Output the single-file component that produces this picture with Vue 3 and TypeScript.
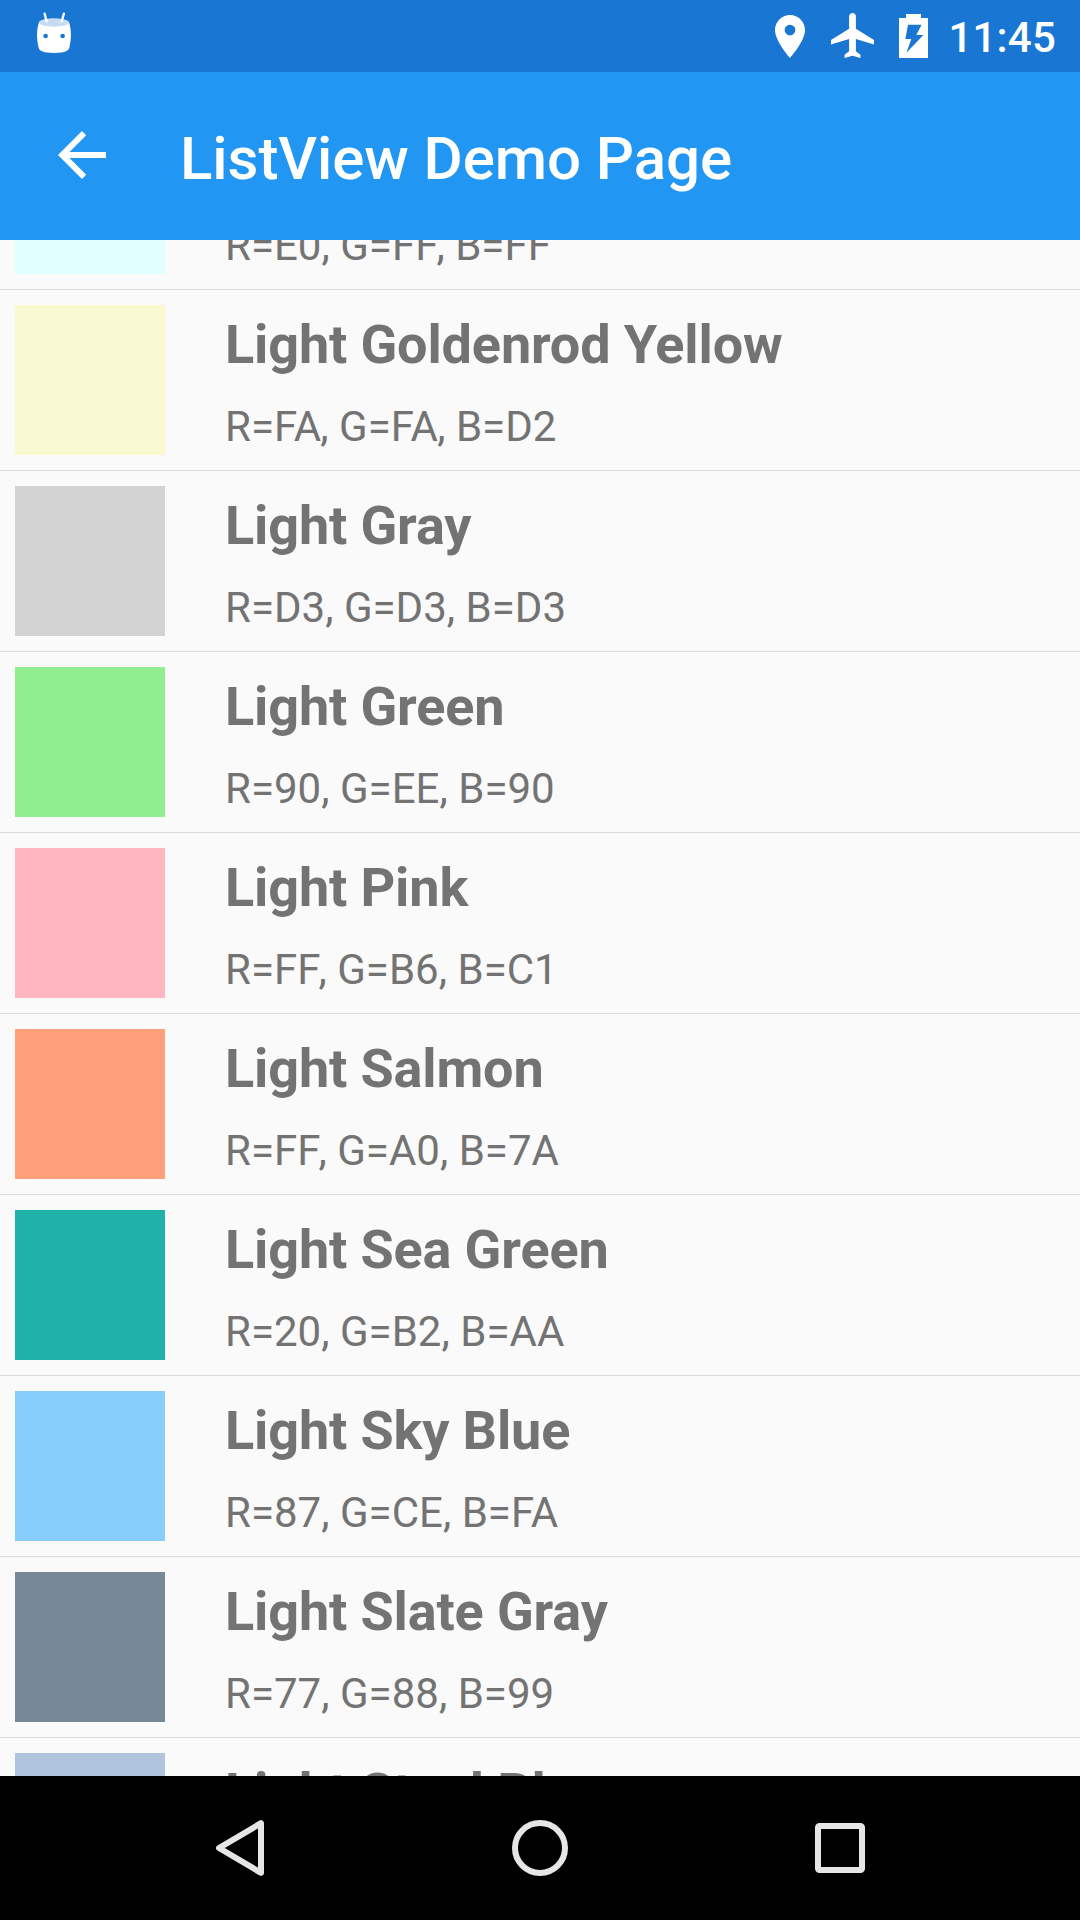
<script setup lang="ts">
interface NamedColor {
  name: string
  r: string
  g: string
  b: string
}

const colors: NamedColor[] = [
  { name: 'Light Cyan', r: 'E0', g: 'FF', b: 'FF' },
  { name: 'Light Goldenrod Yellow', r: 'FA', g: 'FA', b: 'D2' },
  { name: 'Light Gray', r: 'D3', g: 'D3', b: 'D3' },
  { name: 'Light Green', r: '90', g: 'EE', b: '90' },
  { name: 'Light Pink', r: 'FF', g: 'B6', b: 'C1' },
  { name: 'Light Salmon', r: 'FF', g: 'A0', b: '7A' },
  { name: 'Light Sea Green', r: '20', g: 'B2', b: 'AA' },
  { name: 'Light Sky Blue', r: '87', g: 'CE', b: 'FA' },
  { name: 'Light Slate Gray', r: '77', g: '88', b: '99' },
  { name: 'Light Steel Blue', r: 'B0', g: 'C4', b: 'DE' },
]

const hex = (c: NamedColor): string => `#${c.r}${c.g}${c.b}`

// Commas after F and A get their own kerning.
const commaClass = (value: string): string =>
  value.endsWith('F') ? 'after-f' : value.endsWith('A') ? 'after-a' : ''
</script>

<template>
  <div class="screen">
    <header class="status-bar">
      <svg class="debug-icon" width="36" height="42" viewBox="0 0 36 42">
        <path d="M2.9 10.5C4.5 5.2 31.5 5.2 33.1 10.5C35.6 18 35.4 27 33.4 35.5C32.6 38.6 30 40.9 18 40.9S3.4 38.6 2.6 35.5C.6 27 .4 18 2.9 10.5Z" fill="#fff" />
        <ellipse cx="18" cy="10.8" rx="14.6" ry="3.9" fill="#c6dbf3" />
        <path d="M8.6 1.6L10.6 9.4M27.9 1.6L25.7 9.4" stroke="#fff" stroke-width="2.3" stroke-linecap="round" />
        <circle cx="9.6" cy="24" r="2.3" fill="#1976d2" />
        <circle cx="26.6" cy="24" r="2.3" fill="#1976d2" />
      </svg>
      <div class="indicators">
        <svg class="place" width="30" height="43" viewBox="5 2 14 20" preserveAspectRatio="none">
          <path d="M12 2C8.13 2 5 5.13 5 9c0 5.25 7 13 7 13s7-7.75 7-13c0-3.87-3.13-7-7-7zm0 9.5a2.5 2.5 0 1 1 0-5 2.5 2.5 0 0 1 0 5z" fill="#fff" />
        </svg>
        <svg class="plane" width="43" height="45" viewBox="2 2 19 20" preserveAspectRatio="none">
          <path d="M21 16v-2l-8-5V3.5C13 2.67 12.33 2 11.5 2S10 2.67 10 3.5V9l-8 5v2l8-2.5V19l-2 1.5V22l3.5-1 3.5 1v-1.5L13 19v-5.5l8 2.5z" fill="#fff" />
        </svg>
        <svg class="battery" width="29" height="44" viewBox="0 0 29 44">
          <path d="M0 4H7V0H22V4H29V44H0Z" fill="#fff" />
          <path d="M9 10.7H22.6L17.3 21H24.4L7.4 38.8L12.3 25H6.4Z" fill="#1976d2" />
        </svg>
        <span class="clock">11:45</span>
      </div>
    </header>

    <div class="app-bar">
      <svg class="back" width="48" height="48" viewBox="4 4 16 16">
        <path d="M20 11H7.83l5.59-5.59L12 4l-8 8 8 8 1.41-1.41L7.83 13H20v-2z" fill="#fff" />
      </svg>
      <h1 class="title">ListView Demo Page</h1>
    </div>

    <main class="viewport">
      <ul class="list">
        <li v-for="c in colors" :key="c.name" class="row">
          <div class="swatch" :style="{ backgroundColor: hex(c) }"></div>
          <div class="texts">
            <div class="name">{{ c.name }}</div>
            <div class="rgb">R={{ c.r }}<span :class="commaClass(c.r)">,</span> G={{ c.g }}<span :class="commaClass(c.g)">,</span> B={{ c.b }}</div>
          </div>
        </li>
      </ul>
    </main>

    <nav class="nav-bar">
      <svg width="56" height="60" viewBox="0 0 56 60">
        <path d="M49 5.2V54.8L7 30Z" fill="none" stroke="#e6e6e6" stroke-width="6" stroke-linejoin="round" />
      </svg>
      <svg width="56" height="60" viewBox="0 0 56 60">
        <circle cx="28" cy="30" r="25" fill="none" stroke="#e6e6e6" stroke-width="6" />
      </svg>
      <svg width="56" height="60" viewBox="0 0 56 60">
        <rect x="6" y="8" width="44" height="44" rx="1.5" fill="none" stroke="#e6e6e6" stroke-width="6" />
      </svg>
    </nav>
  </div>
</template>

<style>
body {
  margin: 0;
}
</style>

<style scoped>
.screen {
  display: flex;
  flex-direction: column;
  width: 1080px;
  height: 1920px;
  overflow: hidden;
  background: #fafafa;
  font-family: Roboto, "Noto Sans", sans-serif;
}

.status-bar {
  display: flex;
  justify-content: space-between;
  align-items: flex-start;
  flex: none;
  height: 72px;
  box-sizing: border-box;
  padding: 0 24px 0 36px;
  background: #1976d2;
}

.debug-icon {
  margin-top: 12px;
}

.indicators {
  display: flex;
  align-items: flex-start;
}

.place {
  margin: 15px 26px 0 0;
}

.plane {
  margin: 13px 25px 0 0;
}

.battery {
  margin: 14px 20px 0 0;
}

.clock {
  margin-top: 13px;
  font-size: 42px;
  font-weight: 500;
  line-height: 50px;
  letter-spacing: 0.2px;
  color: #fff;
}

.app-bar {
  display: flex;
  align-items: flex-start;
  flex: none;
  height: 168px;
  box-sizing: border-box;
  padding-left: 58px;
  background: #2196f3;
}

.back {
  margin-top: 59px;
}

.title {
  margin: 52px 0 0 74px;
  font-size: 60px;
  font-weight: 500;
  line-height: 70px;
  letter-spacing: -0.06px;
  color: #fff;
  white-space: nowrap;
}

.viewport {
  flex: 1;
  min-height: 0;
  overflow: hidden;
}

/* The list is scrolled part of the way through its first row. */
.list {
  margin: -131px 0 0;
  padding: 0;
  list-style: none;
}

.row {
  display: flex;
  height: 181px;
  box-sizing: border-box;
  padding: 15px 15px 0;
  border-bottom: 1px solid #dadada;
}

.swatch {
  flex: none;
  width: 150px;
  height: 150px;
}

.texts {
  display: flex;
  flex-direction: column;
  gap: 25px;
  padding: 8px 0 0 60px;
  color: #737373;
  white-space: nowrap;
}

.name {
  font-size: 54px;
  font-weight: 700;
  line-height: 64px;
  letter-spacing: -0.14px;
}

.rgb {
  font-size: 42px;
  line-height: 50px;
  letter-spacing: 0.02px;
}

.after-f {
  margin-left: -2px;
}

.after-a {
  margin-left: -0.8px;
}

.nav-bar {
  display: flex;
  justify-content: space-between;
  align-items: center;
  flex: none;
  height: 144px;
  box-sizing: border-box;
  padding: 0 212px;
  background: #000;
}
</style>
